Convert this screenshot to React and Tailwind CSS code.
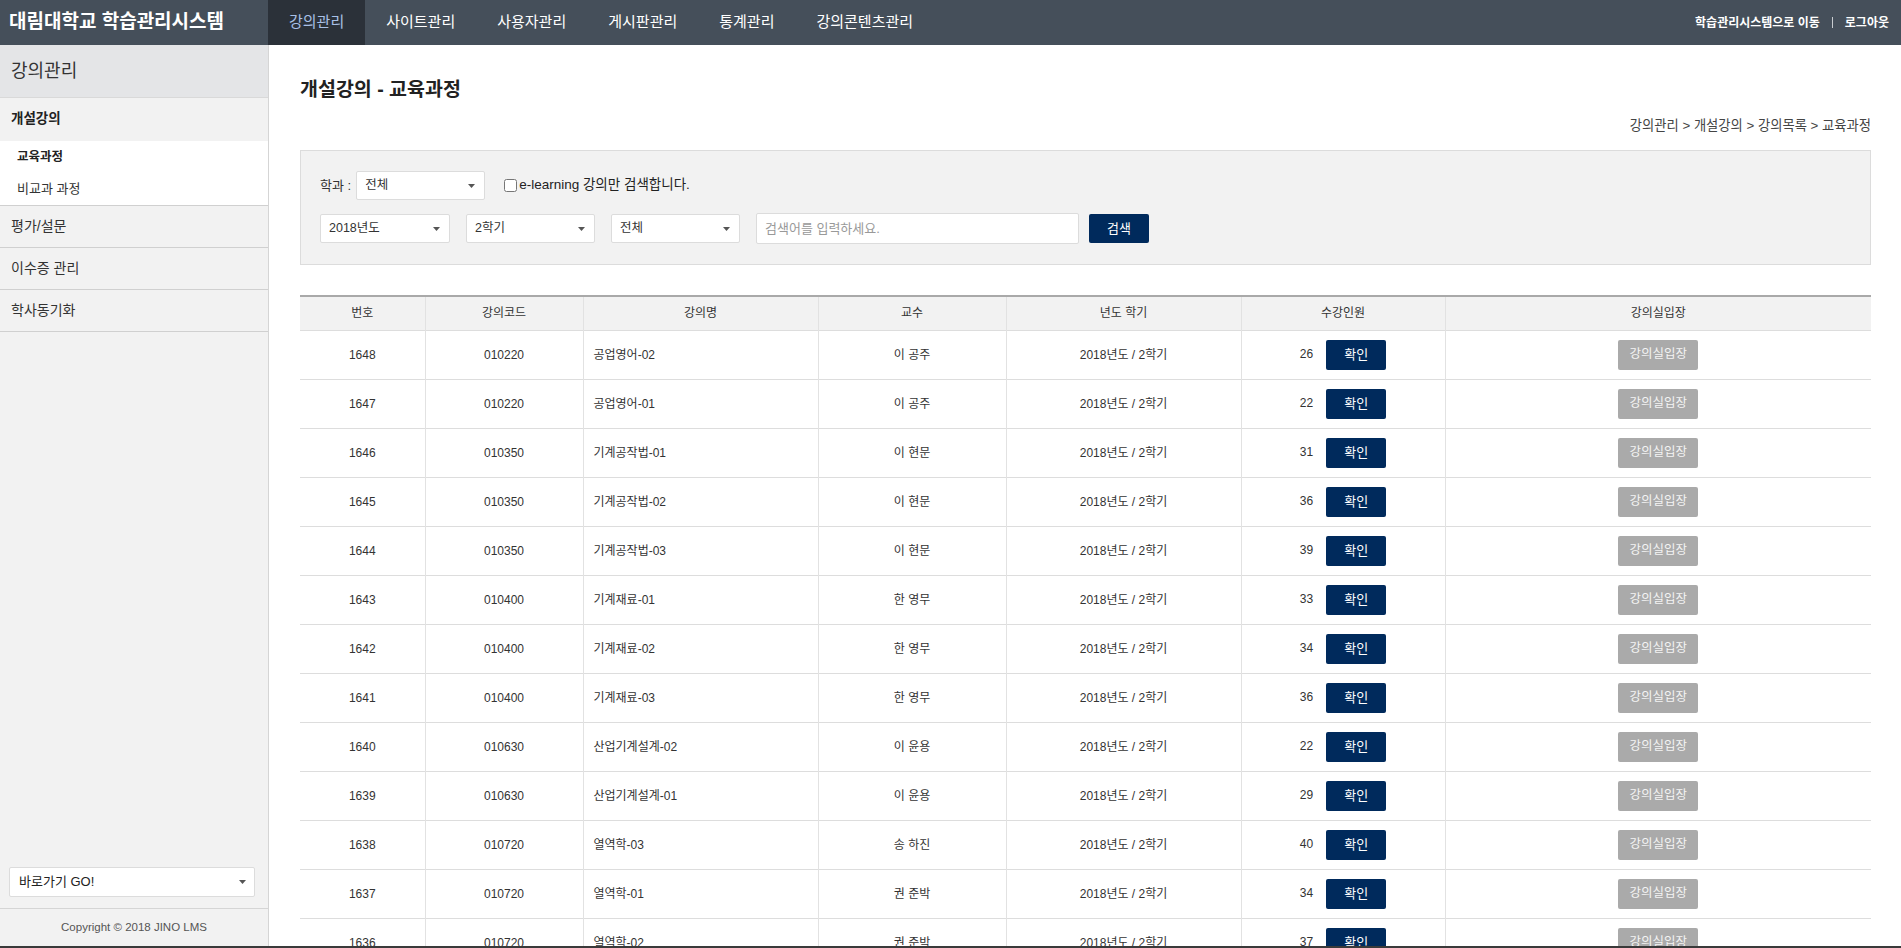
import { useState } from "react";

const navItems = ["강의관리", "사이트관리", "사용자관리", "게시판관리", "통계관리", "강의콘텐츠관리"];

const courses = [
  { no: 1648, code: "010220", name: "공업영어-02", prof: "이 공주", count: 26 },
  { no: 1647, code: "010220", name: "공업영어-01", prof: "이 공주", count: 22 },
  { no: 1646, code: "010350", name: "기계공작법-01", prof: "이 현문", count: 31 },
  { no: 1645, code: "010350", name: "기계공작법-02", prof: "이 현문", count: 36 },
  { no: 1644, code: "010350", name: "기계공작법-03", prof: "이 현문", count: 39 },
  { no: 1643, code: "010400", name: "기계재료-01", prof: "한 영무", count: 33 },
  { no: 1642, code: "010400", name: "기계재료-02", prof: "한 영무", count: 34 },
  { no: 1641, code: "010400", name: "기계재료-03", prof: "한 영무", count: 36 },
  { no: 1640, code: "010630", name: "산업기계설계-02", prof: "이 윤용", count: 22 },
  { no: 1639, code: "010630", name: "산업기계설계-01", prof: "이 윤용", count: 29 },
  { no: 1638, code: "010720", name: "열역학-03", prof: "송 하진", count: 40 },
  { no: 1637, code: "010720", name: "열역학-01", prof: "권 준박", count: 34 },
  { no: 1636, code: "010720", name: "열역학-02", prof: "권 준박", count: 37 },
];

const Caret = () => (
  <svg width="7" height="4" viewBox="0 0 7 4" className="shrink-0">
    <path d="M0 0h7L3.5 4z" fill="#555" />
  </svg>
);

const SelectBox = ({ label, className }) => (
  <div
    className={`flex items-center justify-between rounded-[2px] border border-[#dcdcdc] bg-white pl-[8px] pr-[9px] text-[12.5px] text-[#333] ${className}`}
  >
    <span>{label}</span>
    <Caret />
  </div>
);

const App = () => {
  const [elearning, setElearning] = useState(false);

  return (
    <div className="flex h-screen w-full flex-col overflow-hidden bg-white font-['Liberation_Sans','Noto_Sans_CJK_KR',sans-serif] text-[#333]">
      {/* Top bar */}
      <header className="flex h-[45px] shrink-0 items-stretch bg-[#454f5a]">
        <div className="flex w-[268px] items-center pl-[9px] text-[19px] font-bold text-white">
          대림대학교 학습관리시스템
        </div>
        <nav className="flex">
          {navItems.map((item, i) => (
            <div
              key={item}
              className={`flex items-center px-[21px] text-[15px] ${
                i === 0 ? "bg-[#2b3139] text-[#a8c0e6]" : "text-white"
              }`}
            >
              {item}
            </div>
          ))}
        </nav>
        <div className="ml-auto flex items-center pr-[12px] text-[12px] font-bold text-white">
          <span>학습관리시스템으로 이동</span>
          <span className="mx-[12px] h-[11px] w-px bg-[#c8ccd0]" />
          <span>로그아웃</span>
        </div>
      </header>

      <div className="flex min-h-0 flex-1">
        {/* Sidebar */}
        <aside className="flex w-[269px] shrink-0 flex-col border-r border-[#d5d5d5] bg-[#f2f2f2]">
          <div className="flex h-[53px] items-center border-b border-[#d9d9d9] bg-[#e4e5e7] pl-[11px] text-[18px] text-[#333]">
            강의관리
          </div>
          <div className="flex h-[43px] items-center pl-[11px] text-[13.5px] font-bold text-[#222]">
            개설강의
          </div>
          <div className="border-b border-[#d0d0d0] bg-white">
            <div className="flex h-[32px] items-center pl-[17px] text-[12.5px] font-bold text-[#222]">교육과정</div>
            <div className="flex h-[32px] items-center pl-[17px] text-[13px] text-[#333]">비교과 과정</div>
          </div>
          {["평가/설문", "이수증 관리", "학사동기화"].map((item) => (
            <div
              key={item}
              className="flex h-[42px] items-center border-b border-[#d0d0d0] pl-[11px] text-[14px] text-[#333]"
            >
              {item}
            </div>
          ))}

          <div className="mt-auto pb-[11px] pl-[9px] pr-[13px]">
            <div className="flex h-[30px] items-center justify-between rounded-[2px] border border-[#dcdcdc] bg-white pl-[9px] pr-[8px] text-[13px] text-[#222]">
              <span>바로가기 GO!</span>
              <Caret />
            </div>
          </div>
          <div className="flex h-[38px] items-center justify-center border-t border-[#d5d5d5] text-[11.5px] text-[#555]">
            Copyright © 2018 JINO LMS
          </div>
        </aside>

        {/* Main content */}
        <main className="min-w-0 flex-1 overflow-hidden pl-[31px] pr-[30px]">
          <h1 className="pt-[31px] text-[19.5px] font-semibold leading-[26px] text-[#222]">개설강의 - 교육과정</h1>
          <div className="mt-[16px] text-right text-[13.3px] leading-[16px] text-[#444]">
            강의관리 &gt; 개설강의 &gt; 강의목록 &gt; 교육과정
          </div>

          {/* Search box */}
          <div className="mt-[16px] flex flex-col gap-[13px] border border-[#dcdcdc] bg-[#f2f2f2] px-[19px] py-[20px]">
            <div className="flex items-center">
              <span className="mr-[5px] text-[13px] text-[#333]">학과 :</span>
              <SelectBox label="전체" className="h-[29px] w-[129px]" />
              <label className="ml-[19px] flex items-center gap-[2px] text-[13.5px] text-[#222]">
                <input
                  type="checkbox"
                  checked={elearning}
                  onChange={() => setElearning(!elearning)}
                  className="h-[13px] w-[13px]"
                />
                e-learning 강의만 검색합니다.
              </label>
            </div>
            <div className="flex items-center">
              <SelectBox label="2018년도" className="h-[29px] w-[130px]" />
              <SelectBox label="2학기" className="ml-[16px] h-[29px] w-[129px]" />
              <SelectBox label="전체" className="ml-[16px] h-[29px] w-[129px]" />
              <input
                type="text"
                placeholder="검색어를 입력하세요."
                className="ml-[16px] h-[31px] w-[323px] rounded-[2px] border border-[#dcdcdc] bg-white px-[8px] text-[13px] text-[#333] placeholder:text-[#999] focus:outline-none"
              />
              <button className="ml-[10px] h-[29px] w-[60px] rounded-[2px] bg-[#002a5c] text-[13px] text-white">
                검색
              </button>
            </div>
          </div>

          {/* Course table */}
          <table className="mt-[30px] w-full table-fixed border-collapse border-t-2 border-[#a9a9a9] text-[12px] text-[#333]">
            <colgroup>
              <col className="w-[125px]" />
              <col className="w-[158px]" />
              <col className="w-[235px]" />
              <col className="w-[188px]" />
              <col className="w-[235px]" />
              <col className="w-[204px]" />
              <col />
            </colgroup>
            <thead>
              <tr className="h-[34px] border-b border-[#dddddd] bg-[#f2f2f2]">
                {["번호", "강의코드", "강의명", "교수", "년도 학기", "수강인원", "강의실입장"].map((h, i) => (
                  <th
                    key={h}
                    className={`text-center font-normal ${i > 0 ? "border-l border-[#e2e2e2]" : ""}`}
                  >
                    {h}
                  </th>
                ))}
              </tr>
            </thead>
            <tbody>
              {courses.map((c) => (
                <tr key={c.no} className="h-[49px] border-b border-[#dddddd]">
                  <td className="text-center">{c.no}</td>
                  <td className="border-l border-[#e2e2e2] text-center">{c.code}</td>
                  <td className="border-l border-[#e2e2e2] pl-[10px] text-left">{c.name}</td>
                  <td className="border-l border-[#e2e2e2] text-center">{c.prof}</td>
                  <td className="border-l border-[#e2e2e2] text-center">2018년도 / 2학기</td>
                  <td className="border-l border-[#e2e2e2]">
                    <div className="flex items-center justify-center gap-[13px]">
                      <span className="-mt-[2px]">{c.count}</span>
                      <button className="h-[30px] w-[60px] rounded-[2px] bg-[#002a5c] text-[13px] text-white">
                        확인
                      </button>
                    </div>
                  </td>
                  <td className="border-l border-[#e2e2e2] text-center">
                    <button className="h-[30px] w-[80px] rounded-[2px] bg-[#aaaaaa] text-[12.5px] text-[#f4f4f4]">
                      강의실입장
                    </button>
                  </td>
                </tr>
              ))}
            </tbody>
          </table>
        </main>
      </div>
      <div className="h-[2px] shrink-0 bg-[#3a3a3a]" />
    </div>
  );
};

export default App;
